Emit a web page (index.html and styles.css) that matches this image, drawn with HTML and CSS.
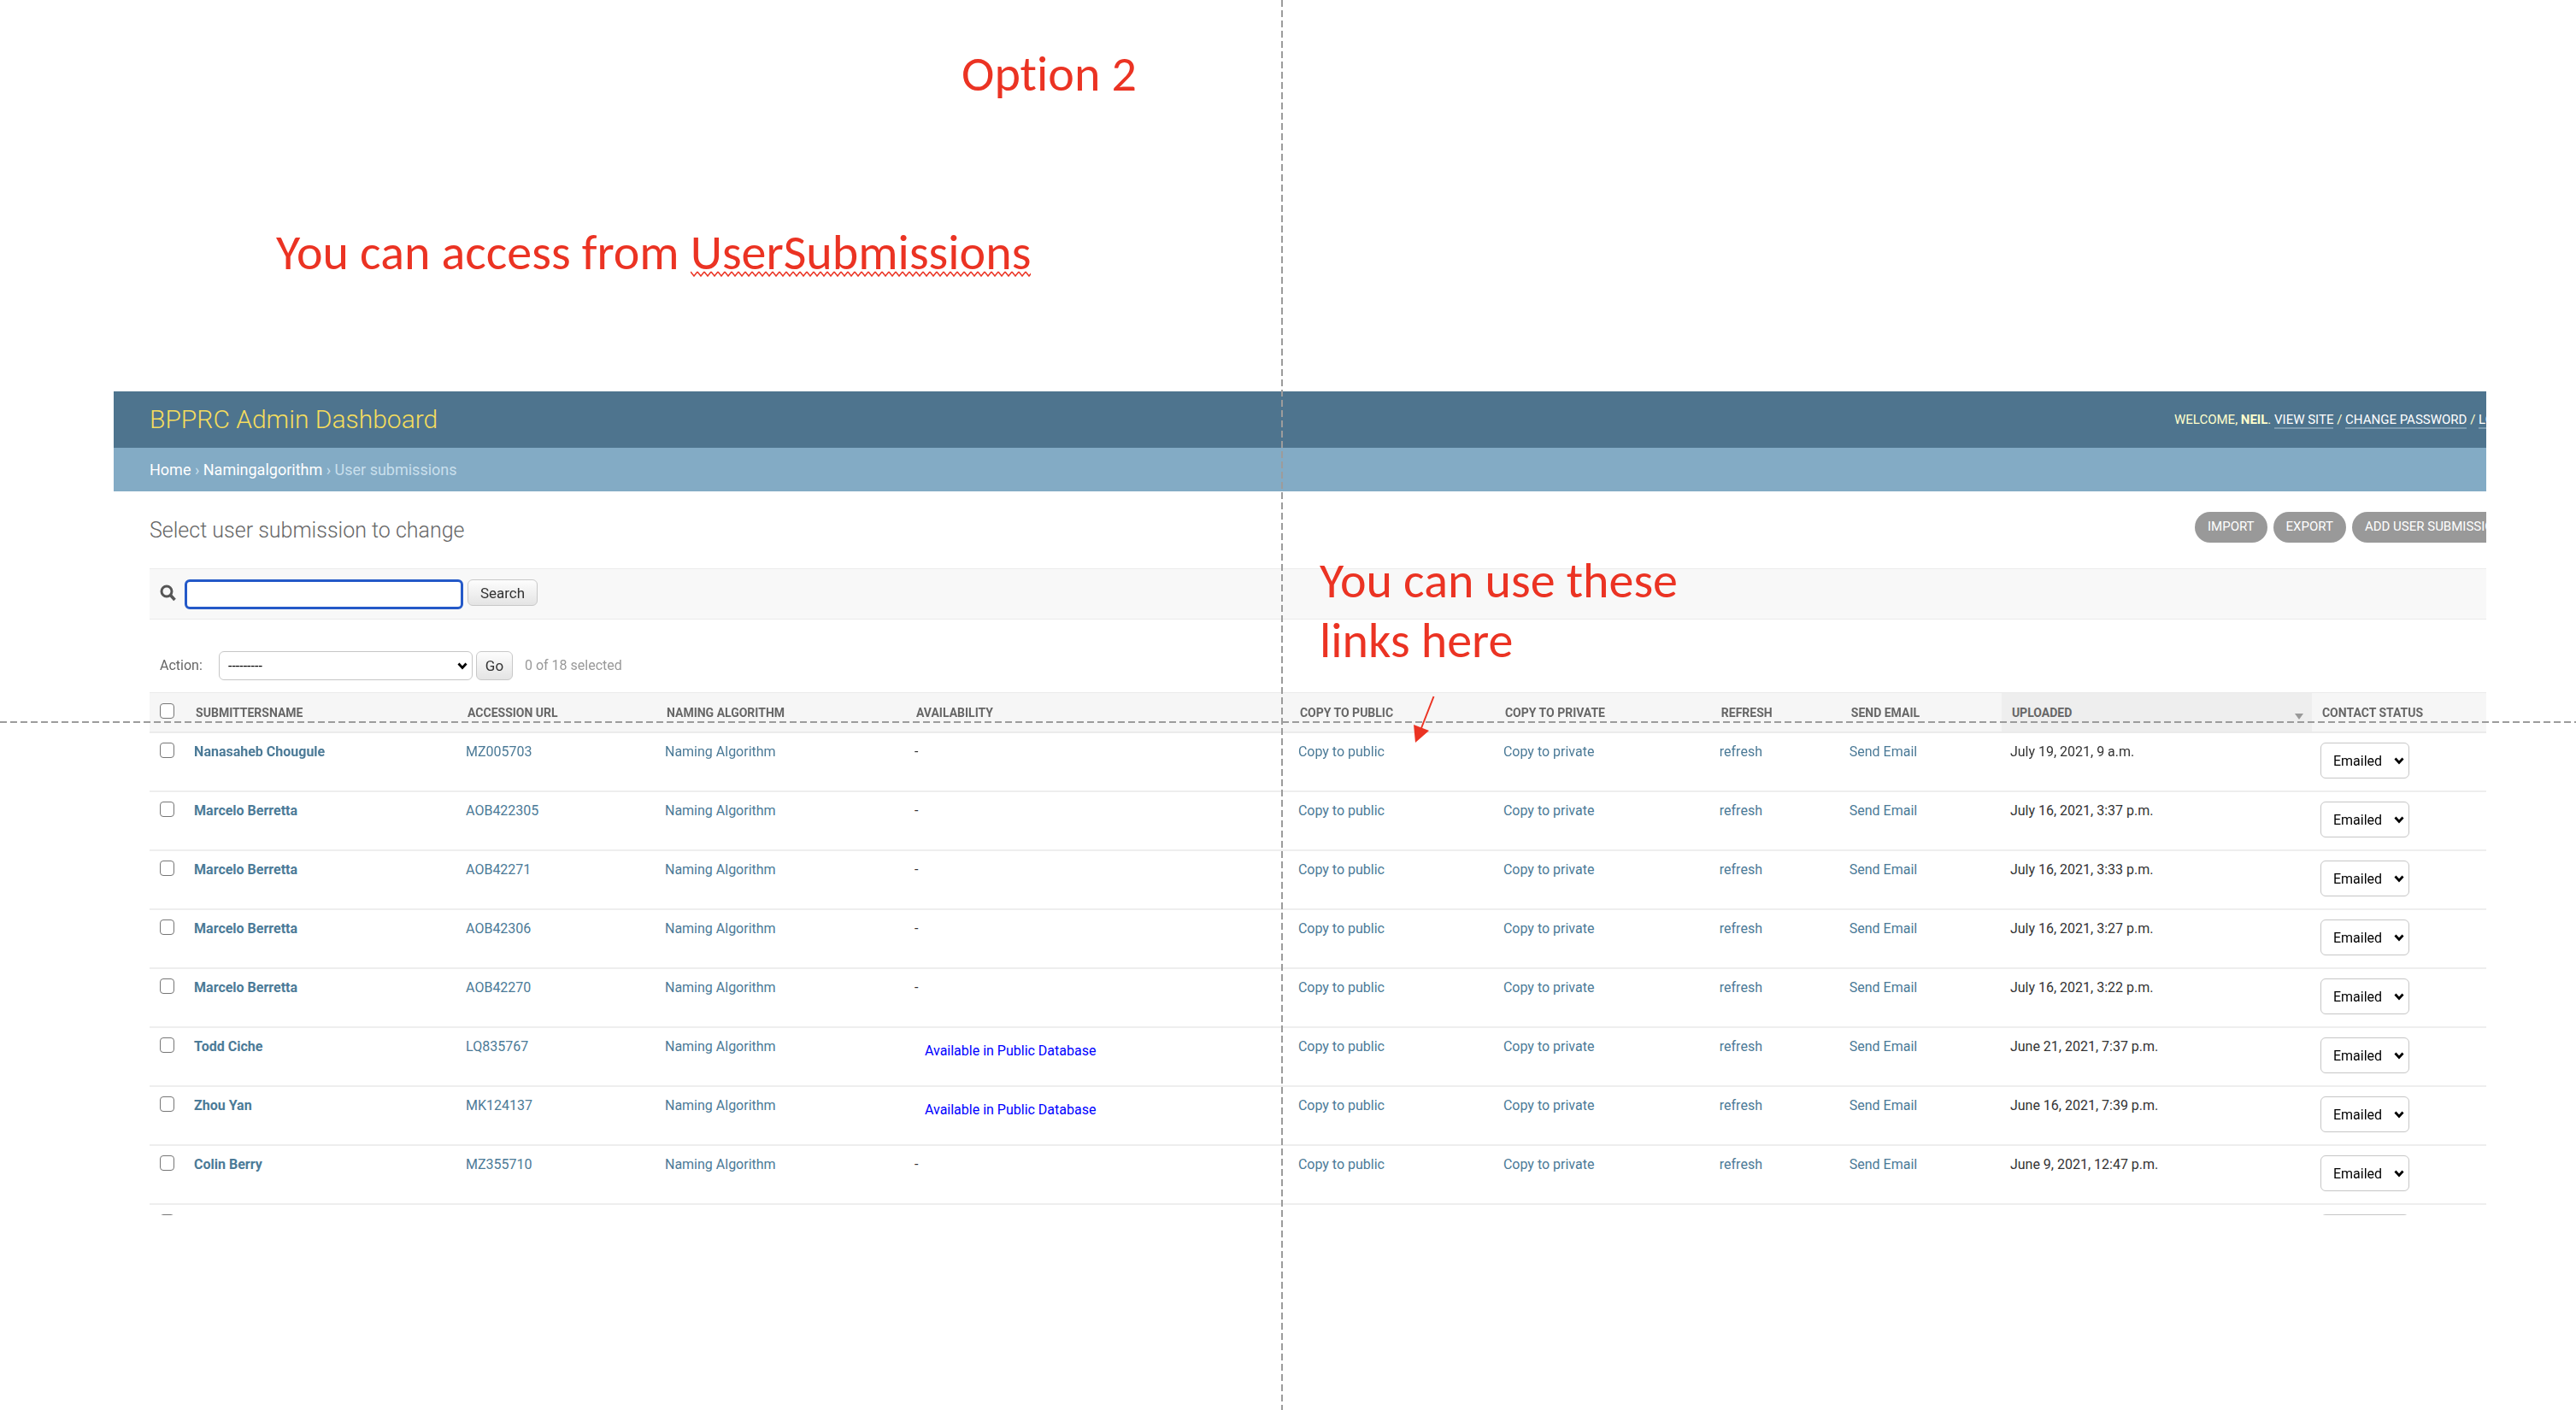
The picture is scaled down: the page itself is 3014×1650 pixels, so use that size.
FILE: index.html
```
<!DOCTYPE html>
<html lang="en">
<head>
<meta charset="utf-8">
<title>Option 2 - BPPRC Admin Dashboard</title>
<link rel="stylesheet" href="styles.css">
</head>
<body>
<main class="slide">
  <h1 class="slide-title">Option 2</h1>
  <p class="slide-text">You can access from <span class="misspelled">UserSubmissions</span></p>

  <section class="panel">
    <header class="branding">
      <div class="site-name">BPPRC Admin Dashboard</div>
      <nav class="user-tools">WELCOME, <strong>NEIL</strong>. <a href="#">VIEW SITE</a> / <a href="#">CHANGE PASSWORD</a> / <a href="#">LOG OUT</a></nav>
    </header>
    <nav class="breadcrumbs"><a href="#">Home</a> › <a href="#">Namingalgorithm</a> › User submissions</nav>

    <div class="content">
      <div class="title-row">
        <h2 class="page-title">Select user submission to change</h2>
        <div class="object-tools">
          <a href="#">IMPORT</a>
          <a href="#">EXPORT</a>
          <a href="#">ADD USER SUBMISSION</a>
        </div>
      </div>

      <form class="search-bar">
        <label for="search" aria-label="Search">
          <svg class="search-icon" viewBox="0 0 20 20"><circle cx="8" cy="8" r="6" fill="none" stroke="#555" stroke-width="3"/><path d="M12.500 12.500L17.500 18" stroke="#555" stroke-width="3.500"/></svg>
        </label>
        <input class="search-input" id="search" type="text" autofocus>
        <button class="button button-search" type="button">Search</button>
      </form>

      <div class="actions">
        <label for="action">Action:</label>
        <select class="select action-select" id="action"><option>---------</option></select>
        <button class="button button-go" type="button">Go</button>
        <span class="counter">0 of 18 selected</span>
      </div>

      <table class="results">
        <colgroup>
          <col class="c-check"><col class="c-name"><col class="c-accession"><col class="c-naming"><col class="c-avail"><col class="c-public"><col class="c-private"><col class="c-refresh"><col class="c-email"><col class="c-uploaded"><col class="c-status">
        </colgroup>
        <thead>
          <tr>
            <th class="check"><input type="checkbox" aria-label="Select all"></th>
            <th>SUBMITTERSNAME</th><th>ACCESSION URL</th><th>NAMING ALGORITHM</th><th>AVAILABILITY</th><th>COPY TO PUBLIC</th><th>COPY TO PRIVATE</th><th>REFRESH</th><th>SEND EMAIL</th>
            <th class="sorted">UPLOADED</th><th>CONTACT STATUS</th>
          </tr>
        </thead>
        <tbody>
          <tr><td class="check"><input type="checkbox" aria-label="Select Nanasaheb Chougule"></td><td><a class="name" href="#">Nanasaheb Chougule</a></td><td><a href="#">MZ005703</a></td><td><a href="#">Naming Algorithm</a></td><td>-</td><td><a href="#">Copy to public</a></td><td><a href="#">Copy to private</a></td><td><a href="#">refresh</a></td><td><a href="#">Send Email</a></td><td>July 19, 2021, 9 a.m.</td><td class="status"><select class="select" aria-label="Contact status"><option>Emailed</option></select></td></tr>
          <tr><td class="check"><input type="checkbox" aria-label="Select Marcelo Berretta"></td><td><a class="name" href="#">Marcelo Berretta</a></td><td><a href="#">AOB422305</a></td><td><a href="#">Naming Algorithm</a></td><td>-</td><td><a href="#">Copy to public</a></td><td><a href="#">Copy to private</a></td><td><a href="#">refresh</a></td><td><a href="#">Send Email</a></td><td>July 16, 2021, 3:37 p.m.</td><td class="status"><select class="select" aria-label="Contact status"><option>Emailed</option></select></td></tr>
          <tr><td class="check"><input type="checkbox" aria-label="Select Marcelo Berretta"></td><td><a class="name" href="#">Marcelo Berretta</a></td><td><a href="#">AOB42271</a></td><td><a href="#">Naming Algorithm</a></td><td>-</td><td><a href="#">Copy to public</a></td><td><a href="#">Copy to private</a></td><td><a href="#">refresh</a></td><td><a href="#">Send Email</a></td><td>July 16, 2021, 3:33 p.m.</td><td class="status"><select class="select" aria-label="Contact status"><option>Emailed</option></select></td></tr>
          <tr><td class="check"><input type="checkbox" aria-label="Select Marcelo Berretta"></td><td><a class="name" href="#">Marcelo Berretta</a></td><td><a href="#">AOB42306</a></td><td><a href="#">Naming Algorithm</a></td><td>-</td><td><a href="#">Copy to public</a></td><td><a href="#">Copy to private</a></td><td><a href="#">refresh</a></td><td><a href="#">Send Email</a></td><td>July 16, 2021, 3:27 p.m.</td><td class="status"><select class="select" aria-label="Contact status"><option>Emailed</option></select></td></tr>
          <tr><td class="check"><input type="checkbox" aria-label="Select Marcelo Berretta"></td><td><a class="name" href="#">Marcelo Berretta</a></td><td><a href="#">AOB42270</a></td><td><a href="#">Naming Algorithm</a></td><td>-</td><td><a href="#">Copy to public</a></td><td><a href="#">Copy to private</a></td><td><a href="#">refresh</a></td><td><a href="#">Send Email</a></td><td>July 16, 2021, 3:22 p.m.</td><td class="status"><select class="select" aria-label="Contact status"><option>Emailed</option></select></td></tr>
          <tr><td class="check"><input type="checkbox" aria-label="Select Todd Ciche"></td><td><a class="name" href="#">Todd Ciche</a></td><td><a href="#">LQ835767</a></td><td><a href="#">Naming Algorithm</a></td><td><div class="available">Available in Public Database</div></td><td><a href="#">Copy to public</a></td><td><a href="#">Copy to private</a></td><td><a href="#">refresh</a></td><td><a href="#">Send Email</a></td><td>June 21, 2021, 7:37 p.m.</td><td class="status"><select class="select" aria-label="Contact status"><option>Emailed</option></select></td></tr>
          <tr><td class="check"><input type="checkbox" aria-label="Select Zhou Yan"></td><td><a class="name" href="#">Zhou Yan</a></td><td><a href="#">MK124137</a></td><td><a href="#">Naming Algorithm</a></td><td><div class="available">Available in Public Database</div></td><td><a href="#">Copy to public</a></td><td><a href="#">Copy to private</a></td><td><a href="#">refresh</a></td><td><a href="#">Send Email</a></td><td>June 16, 2021, 7:39 p.m.</td><td class="status"><select class="select" aria-label="Contact status"><option>Emailed</option></select></td></tr>
          <tr><td class="check"><input type="checkbox" aria-label="Select Colin Berry"></td><td><a class="name" href="#">Colin Berry</a></td><td><a href="#">MZ355710</a></td><td><a href="#">Naming Algorithm</a></td><td>-</td><td><a href="#">Copy to public</a></td><td><a href="#">Copy to private</a></td><td><a href="#">refresh</a></td><td><a href="#">Send Email</a></td><td>June 9, 2021, 12:47 p.m.</td><td class="status"><select class="select" aria-label="Contact status"><option>Emailed</option></select></td></tr>
          <tr><td class="check"><input type="checkbox" aria-label="Select submission"></td><td colspan="9"></td><td class="status"><select class="select" aria-label="Contact status"><option></option></select></td></tr>
        </tbody>
      </table>
    </div>
  </section>

  <div class="guide guide-vertical"></div>
  <div class="guide guide-horizontal"></div>
  <p class="note">You can use these<br>links here</p>
  <svg class="arrow" viewBox="0 0 30 60"><path d="M25.500 3L11 40" stroke="#eb3323" stroke-width="2"/><path d="M2 36L20 43L4 57Z" fill="#eb3323"/></svg>
</main>
</body>
</html>
```
FILE: styles.css
```
* { box-sizing: border-box; }

body {
  margin: 0;
  background: #fff;
  color: #333;
  font: 16px/20px Roboto, "Liberation Sans", sans-serif;
}

a { color: #4b7a97; text-decoration: none; }

.slide {
  position: relative;
  min-height: 100vh;
  padding-top: 52px;
  overflow: hidden;
}

.slide-title,
.slide-text,
.note {
  margin: 0;
  color: #eb3323;
  font: 400 58px/70px Carlito, Calibri, Lato, sans-serif;
  font-variant-ligatures: none;
}
.slide-title { padding-left: 1125px; }
.slide-text { margin: 139px 0 127px; padding-left: 323px; }

.misspelled {
  background: url("data:image/svg+xml,%3Csvg xmlns='http://www.w3.org/2000/svg' width='8' height='7'%3E%3Cpath d='M0 1L4 6L8 1' fill='none' stroke='%23eb3323' stroke-width='1.5'/%3E%3C/svg%3E") 0 57px repeat-x;
}

.panel {
  max-height: 964px;
  margin: 0 105px 0 133px;
  overflow: hidden;
}

.branding {
  display: flex;
  align-items: center;
  justify-content: space-between;
  height: 66px;
  padding-left: 42px;
  background: #4e748e;
}
.site-name { color: #f5dd5d; font-size: 30px; font-weight: 300; line-height: 36px; }
.user-tools {
  width: 365px;
  overflow: hidden;
  color: #ffc;
  font-size: 15px;
  line-height: 24px;
  white-space: nowrap;
}
.user-tools a { color: #fff; border-bottom: 2px solid #7c9bb0; }

.breadcrumbs {
  height: 51px;
  padding: 16px 42px;
  background: #83abc5;
  color: #c9dfec;
  font-size: 18px;
}
.breadcrumbs a { color: #fff; }

.content { padding: 24px 0 0 42px; }

.title-row {
  display: flex;
  justify-content: space-between;
  height: 66px;
}
.page-title { margin: 0; color: #666; font-size: 25px; font-weight: 300; line-height: 44px; }

.object-tools {
  display: flex;
  flex: none;
  gap: 7px;
  width: 341px;
  overflow: hidden;
  white-space: nowrap;
}
.object-tools a {
  flex: none;
  height: 36px;
  padding: 0 15px;
  border-radius: 18px;
  background: #999;
  color: #fff;
  font-size: 15px;
  line-height: 34px;
}

.search-bar {
  display: flex;
  align-items: flex-start;
  height: 60px;
  padding: 12px;
  border: solid #ebebeb;
  border-width: 1px 0;
  background: #f8f8f8;
}
.search-icon { display: block; width: 20px; height: 20px; margin: 6px 9px 0 0; }
.search-input {
  width: 326px;
  height: 35px;
  padding: 0 5px;
  border: 3px solid #2459c8;
  border-radius: 6px;
  outline: none;
  background: #fff;
  font: 18px Roboto, sans-serif;
}

.button {
  padding: 0;
  border: 1px solid #c8c8c8;
  border-radius: 6px;
  background: linear-gradient(#fdfdfd, #e4e4e4);
  color: #333;
  font: 17px/28px Roboto, sans-serif;
}
.button-search { width: 82px; height: 31px; margin-left: 5px; }
.button-go { width: 43px; height: 34px; margin: 0 14px 0 4px; }

.actions {
  display: flex;
  align-items: center;
  height: 34px;
  margin: 37px 0 14px;
  padding-left: 12px;
  color: #666;
}
.actions label { width: 69px; }
.counter { color: #999; }

.select {
  appearance: none;
  height: 42px;
  padding: 0 0 0 14px;
  border: 1px solid #c6c6c6;
  border-radius: 6px;
  background: #fff url("data:image/svg+xml,%3Csvg xmlns='http://www.w3.org/2000/svg' width='12' height='9'%3E%3Cpath d='M1.5 1.500L6 6.500L10.500 1.500' fill='none' stroke='%23000' stroke-width='2.800'/%3E%3C/svg%3E") right 5px center no-repeat;
  color: #000;
  font: 16px Roboto, sans-serif;
}
.action-select { width: 297px; height: 34px; padding-left: 10px; }

.results {
  width: 100%;
  table-layout: fixed;
  border-collapse: separate;
  border-spacing: 0;
}
.c-check { width: 1.54%; }
.c-name { width: 11.63%; }
.c-accession { width: 8.52%; }
.c-naming { width: 10.68%; }
.c-avail { width: 16.42%; }
.c-public { width: 8.78%; }
.c-private { width: 9.25%; }
.c-refresh { width: 5.56%; }
.c-email { width: 6.88%; }
.c-uploaded { width: 13.28%; }
.c-status { width: 7.46%; }

th {
  height: 48px;
  padding: 0 12px;
  border: solid #ebebeb;
  border-width: 1px 0 2px;
  background: #f6f6f6;
  color: #666;
  font-size: 14px;
  text-align: left;
  white-space: nowrap;
}
th.sorted { position: relative; background: #eee; }
th.sorted::after {
  content: "";
  position: absolute;
  right: 10px;
  top: 24px;
  border: solid transparent;
  border-width: 7px 5px 0;
  border-top-color: #999;
}

td {
  height: 69px;
  padding: 12px 10px 0;
  border-bottom: 2px solid #eee;
  vertical-align: top;
  white-space: nowrap;
}
th.check { padding: 0 12px 3px; }
td.check { padding: 11px 12px 0; }
td.status { padding-top: 11px; }
.status .select { display: block; width: 104px; }

input[type="checkbox"] {
  appearance: none;
  display: block;
  width: 17px;
  height: 18px;
  margin: 0;
  border: 1px solid #767676;
  border-radius: 4px;
  background: #fff;
}

.name { font-weight: 700; }
.available { padding: 5px 12px; color: #00f; }

.guide { position: absolute; pointer-events: none; }
.guide-vertical {
  top: 0;
  bottom: 0;
  left: 1499px;
  width: 2px;
  background: repeating-linear-gradient(#9c9c9c 0 8px, transparent 8px 12px);
}
.guide-horizontal {
  top: 844px;
  left: 0;
  right: 0;
  height: 2px;
  background: repeating-linear-gradient(90deg, #9c9c9c 0 8px, transparent 8px 12px);
}
.note { position: absolute; top: 645px; left: 1544px; }
.arrow { position: absolute; top: 812px; left: 1652px; width: 30px; height: 60px; }
```
